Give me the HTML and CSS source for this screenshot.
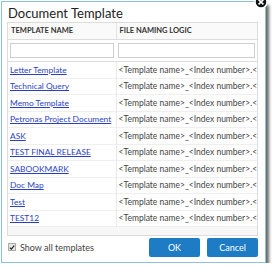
FILE: index.html
```html
<!DOCTYPE html>
<html>
<head>
    <title>Document Template</title>
    <link rel="stylesheet" href="styles.css">
</head>
<body>
    <div class="dialog">
        <!-- Close button -->
        <span class="close-btn">
            <svg width="14" height="14" viewBox="0 0 14 14">
                <circle cx="7" cy="7" r="6" fill="#111" stroke="#fff" stroke-width="1.5"/>
                <path d="M4.6 4.6 L9.4 9.4 M9.4 4.6 L4.6 9.4" stroke="#fff" stroke-width="1.6"/>
            </svg>
        </span>

        <h1 class="dialog-title">Document Template</h1>

        <div class="grid">
            <table class="grid-table">
                <colgroup>
                    <col class="col-name">
                    <col class="col-logic">
                </colgroup>
                <thead>
                    <tr class="grid-head">
                        <th>TEMPLATE NAME</th>
                        <th>FILE NAMING LOGIC</th>
                    </tr>
                    <tr class="grid-filter">
                        <td><input type="text" class="filter-input"></td>
                        <td><input type="text" class="filter-input"></td>
                    </tr>
                </thead>
                <tbody>
                    <tr><td><a href="#">Letter Template</a></td><td>&lt;Template name&gt;_&lt;Index number&gt;.&lt;Ext&gt;</td></tr>
                    <tr><td><a href="#">Technical Query</a></td><td>&lt;Template name&gt;_&lt;Index number&gt;.&lt;Ext&gt;</td></tr>
                    <tr><td><a href="#">Memo Template</a></td><td>&lt;Template name&gt;_&lt;Index number&gt;.&lt;Ext&gt;</td></tr>
                    <tr><td><a href="#">Petronas Project Document</a></td><td>&lt;Template name&gt;_&lt;Index number&gt;.&lt;Ext&gt;</td></tr>
                    <tr><td><a href="#">ASK</a></td><td>&lt;Template name&gt;_&lt;Index number&gt;.&lt;Ext&gt;</td></tr>
                    <tr><td><a href="#">TEST FINAL RELEASE</a></td><td>&lt;Template name&gt;_&lt;Index number&gt;.&lt;Ext&gt;</td></tr>
                    <tr><td><a href="#">SABOOKMARK</a></td><td>&lt;Template name&gt;_&lt;Index number&gt;.&lt;Ext&gt;</td></tr>
                    <tr><td><a href="#">Doc Map</a></td><td>&lt;Template name&gt;_&lt;Index number&gt;.&lt;Ext&gt;</td></tr>
                    <tr><td><a href="#">Test</a></td><td>&lt;Template name&gt;_&lt;Index number&gt;.&lt;Ext&gt;</td></tr>
                    <tr><td><a href="#">TEST12</a></td><td>&lt;Template name&gt;_&lt;Index number&gt;.&lt;Ext&gt;</td></tr>
                </tbody>
            </table>
            <div class="grid-foot"></div>
        </div>

        <div class="dialog-footer">
            <label class="show-all">
                <span class="check-box">
                    <svg width="7" height="7" viewBox="0 0 7 7">
                        <path d="M1 3.6 L2.8 5.4 L6 1.4" fill="none" stroke="#222" stroke-width="1.4"/>
                    </svg>
                </span>
                Show all templates
            </label>
            <div class="actions">
                <button class="btn">OK</button>
                <button class="btn">Cancel</button>
            </div>
        </div>
    </div>
</body>
</html>
```

FILE: styles.css
```css
body {
    margin: 0;
    background: #fff;
    font-family: Lato, "Open Sans", sans-serif;
}
.dialog {
    position: relative;
    box-sizing: border-box;
    margin: 1px 0 0 1px;
    width: 265px;
    height: 262px;
    border: 1px solid #8ec2da;
    background: #fff;
    box-shadow: 3px 4px 3px rgba(0, 0, 0, 0.6);
    padding: 0 7px 0 5px;
    display: flex;
    flex-direction: column;
}
.close-btn {
    position: absolute;
    top: -7px;
    right: -3px;
    width: 14px;
    height: 14px;
}
.close-btn svg {
    display: block;
}
.dialog-title {
    margin: 0;
    height: 20px;
    line-height: 22px;
    font-size: 13px;
    font-weight: normal;
    color: #222;
    padding-left: 1px;
}
.grid {
    border: 1px solid #dcdcdc;
}
.grid-table {
    width: 100%;
    table-layout: fixed;
    border-collapse: collapse;
    font-size: 8.5px;
    line-height: 10px;
}
.col-name {
    width: 108px;
}
.grid-head th {
    height: 16px;
    padding: 0 0 0 3px;
    text-align: left;
    font-weight: bold;
    font-size: 7.5px;
    color: #333;
    background: #fafafa;
    border-bottom: 1px solid #dcdcdc;
    border-right: 1px solid #e4e4e4;
}
.grid-filter td {
    height: 21px;
    padding: 0 2px;
    border-bottom: 1px solid #dcdcdc;
}
.filter-input {
    box-sizing: border-box;
    display: block;
    width: 100%;
    height: 15px;
    border: 1px solid #cfcfcf;
    margin: 0;
    padding: 0;
}
.grid-table tbody td {
    height: 15.5px;
    padding: 0 0 0 2px;
    white-space: nowrap;
    overflow: hidden;
    color: #444;
    border-bottom: 1px solid #efefef;
    border-right: 1px solid #e8e8e8;
}
.grid-table tbody td:last-child,
.grid-head th:last-child {
    border-right: none;
}
.grid-table a {
    color: #2b3fc4;
    font-size: 8.4px;
}
.grid-foot {
    height: 8px;
    background: #f7f7f7;
}
.dialog-footer {
    display: flex;
    align-items: center;
    justify-content: space-between;
    margin-top: 1px;
    height: 20px;
}
.show-all {
    display: flex;
    align-items: center;
    gap: 4px;
    font-size: 9px;
    color: #444;
    padding-left: 1px;
}
.check-box {
    box-sizing: border-box;
    width: 8px;
    height: 8px;
    border: 1px solid #aaa;
    background: #e6e6e6;
    display: flex;
    align-items: center;
    justify-content: center;
}
.check-box svg {
    display: block;
}
.actions {
    display: flex;
    gap: 7px;
}
.btn {
    width: 51px;
    height: 19px;
    border: none;
    border-radius: 2px;
    background: #1e7cc4;
    color: #fff;
    font-family: Lato, "Open Sans", sans-serif;
    font-size: 9px;
    padding: 0;
}
```
